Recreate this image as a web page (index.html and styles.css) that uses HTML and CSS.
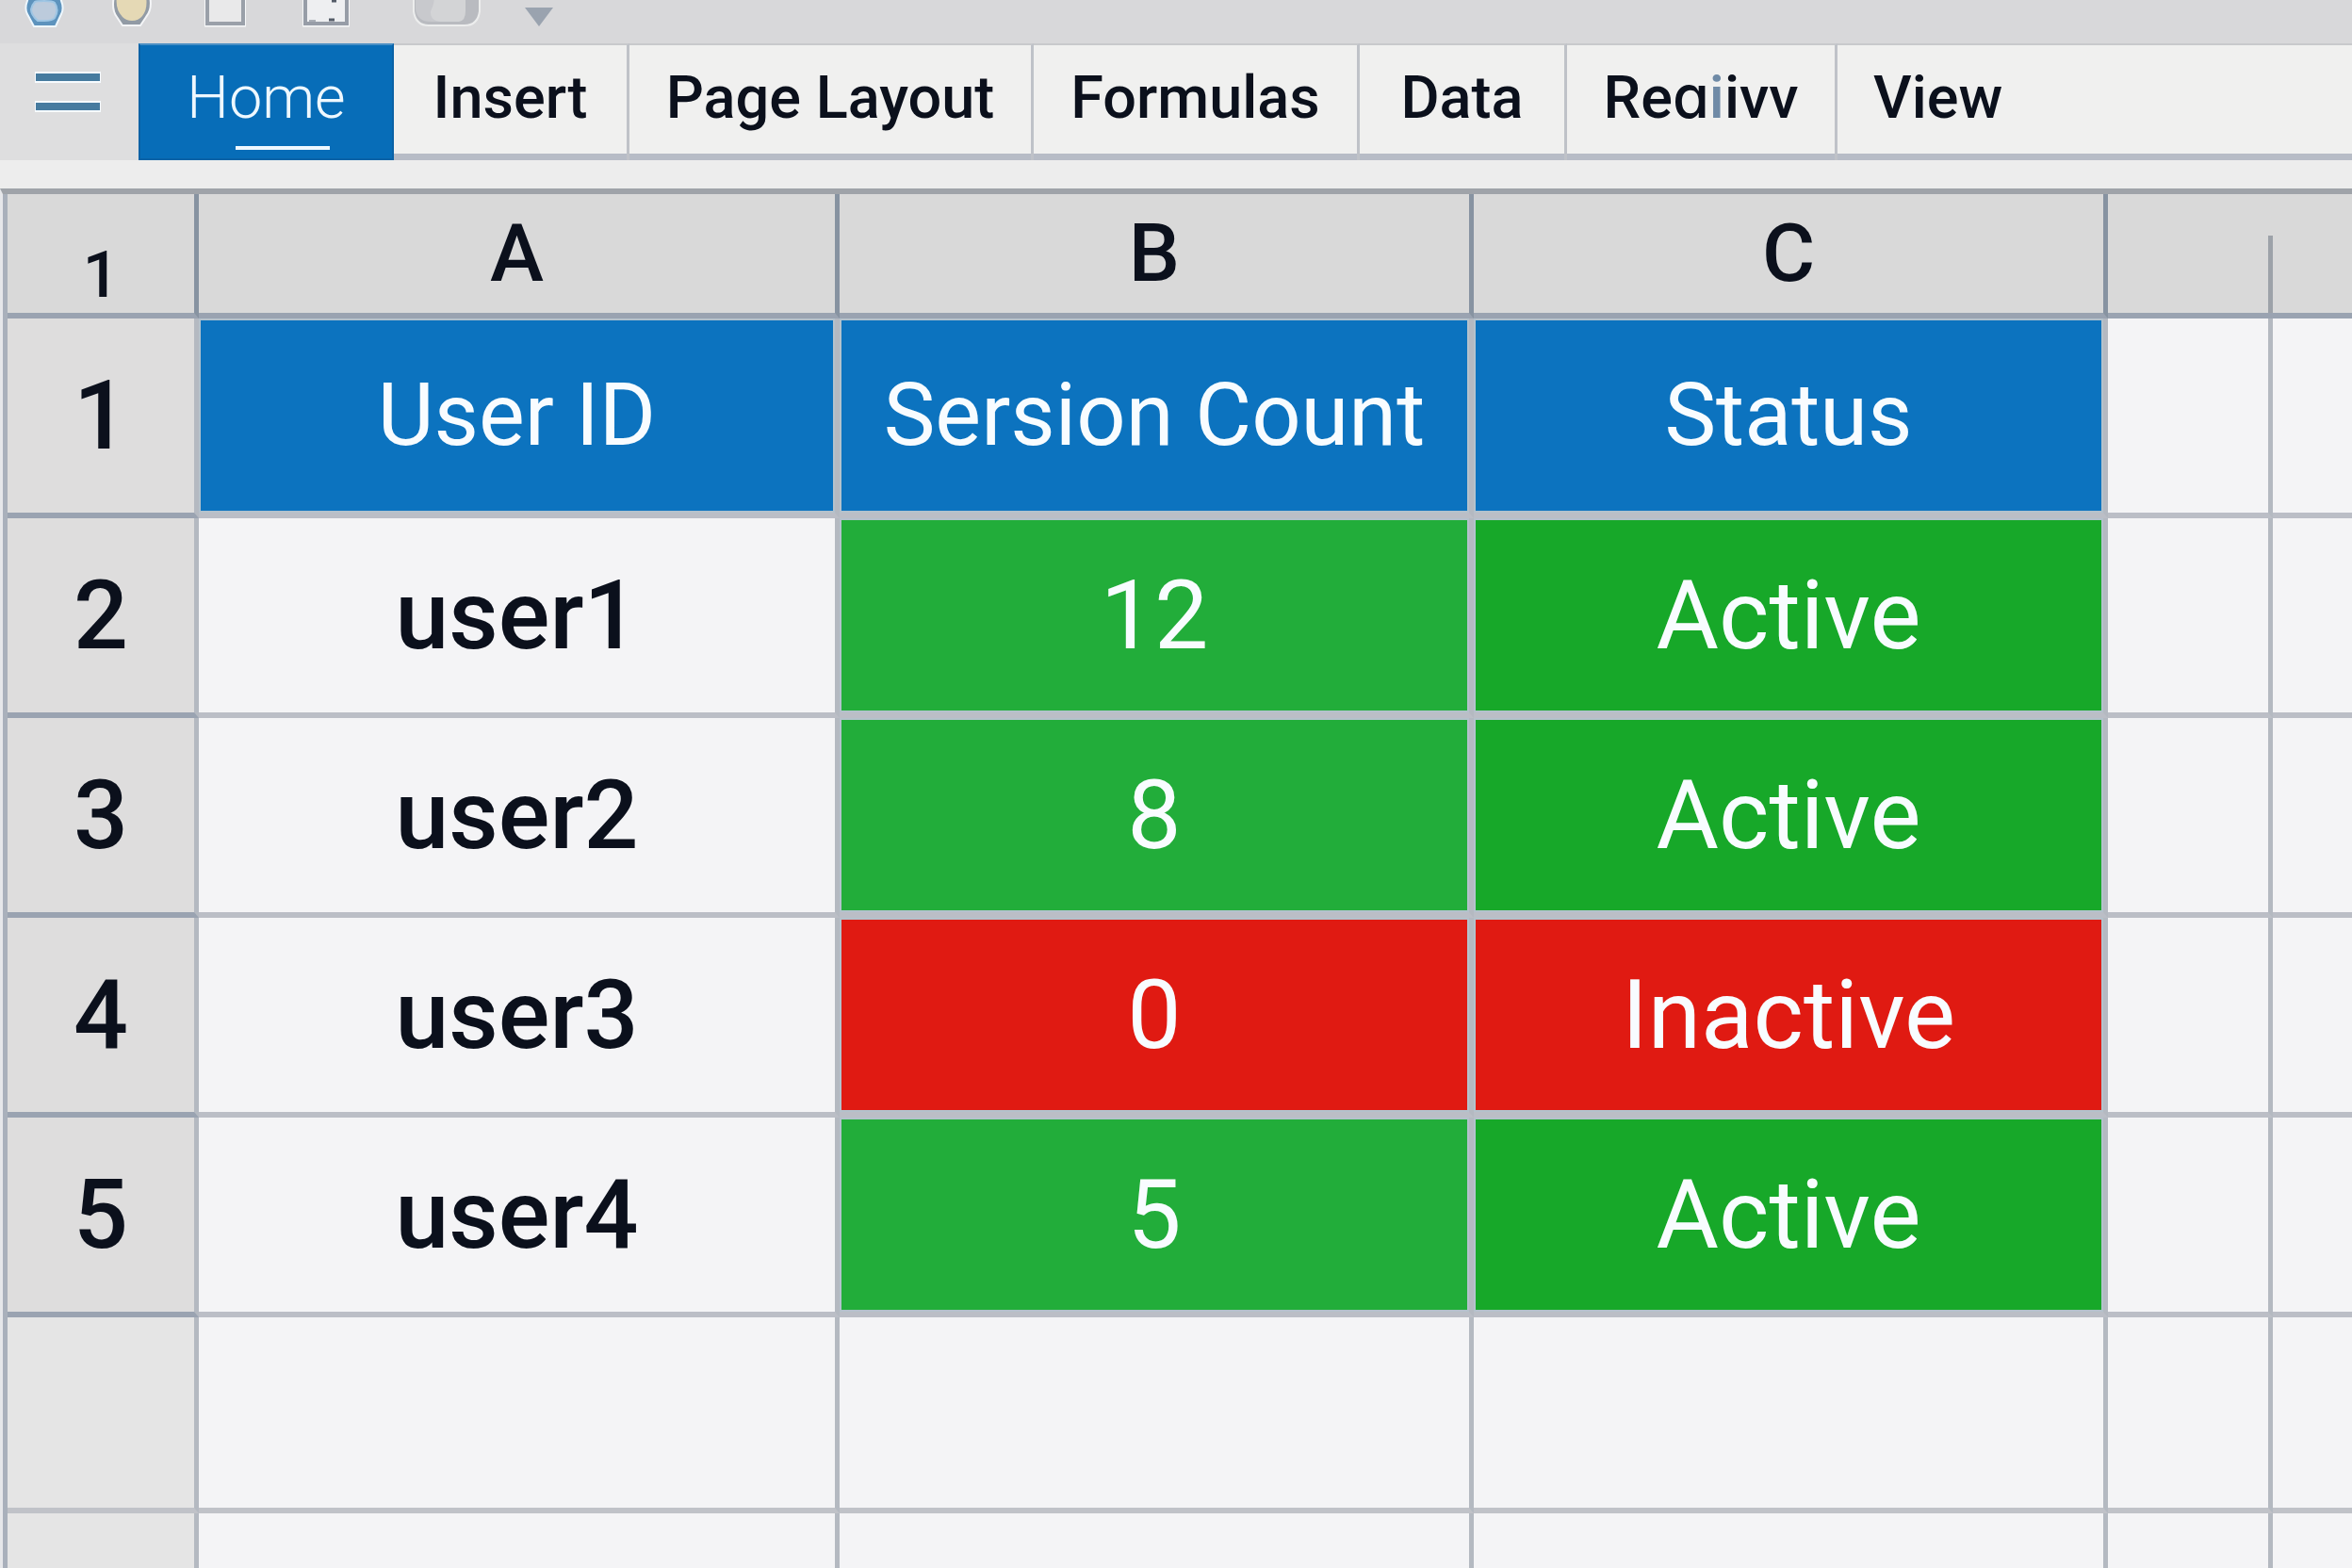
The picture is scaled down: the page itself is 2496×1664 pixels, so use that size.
FILE: index.html
```
<!DOCTYPE html>
<html lang="en">
<head>
<meta charset="utf-8">
<title>User sessions</title>
<link rel="stylesheet" href="styles.css">
</head>
<body>
<header class="quickbar">
  <button class="tool" aria-label="Save"><svg width="44" height="30" viewBox="0 0 44 30"><path d="M6 -4 Q0 8 4 15 L11 28 H34 L40 15 Q44 8 38 -4Z" fill="#5d93bd" stroke="#eef7fd" stroke-width="2"/><path d="M12 2 Q14 1 22 1 Q31 1 33 3 Q38 10 33 19 Q31 22 22 22 H15 Q8 16 8 10 Q9 5 12 2Z" fill="#bccbdc" stroke="#9fc6e4" stroke-width="2"/></svg></button>
  <button class="tool" aria-label="Undo"><svg width="44" height="30" viewBox="0 0 44 30"><path d="M3 -4 Q0 10 6 18 L12 27 H31 L37 18 Q44 10 41 -4Z" fill="#929ba5" stroke="#f4f5f7" stroke-width="2"/><path d="M6 -4 Q4 10 12 18 Q16 22 22 22 Q29 22 33 17 Q39 10 37 -4Z" fill="#e5d9b5"/></svg></button>
  <button class="tool" aria-label="New"><svg width="44" height="30" viewBox="0 0 44 30"><path d="M3 -4 V25 H41 V-4" fill="#eeeeef" stroke="#f6f7f8" stroke-width="7"/><path d="M3 -4 V25 H41 V-4" fill="#e9e9ea" stroke="#9aa0a9" stroke-width="4"/></svg></button>
  <button class="tool" aria-label="Print"><svg width="50" height="30" viewBox="0 0 50 30"><path d="M3 -4 V25 H47 V-4" fill="#eeeff1" stroke="#f6f7f8" stroke-width="7"/><path d="M3 -4 V25 H47 V-4" fill="#eeeff1" stroke="#979da7" stroke-width="4"/><path d="M31 1H36M28 21H34" stroke="#555c68" stroke-width="3"/><path d="M7 22H14" stroke="#a9aeb6" stroke-width="2"/></svg></button>
  <button class="tool" aria-label="Shape"><svg width="74" height="30" viewBox="0 0 74 30"><path d="M2 -4 V12 Q4 27 18 27 H56 Q70 27 72 12 V-4Z" fill="#b9bbc0" stroke="#eceded" stroke-width="2"/><path d="M4 -4 V10 Q6 23 20 23 H40 V-4Z" fill="#c8c9cd"/><path d="M24 -4 Q24 4 20 12 Q19 22 30 23 H50 Q57 22 57 12 V-4Z" fill="#d3d4d6"/></svg></button>
  <button class="tool" aria-label="More"><svg width="32" height="30" viewBox="0 0 32 30"><path d="M1 8 H31 L16 28Z" fill="#9aa3af"/></svg></button>
</header>
<nav class="ribbon">
  <button class="menu" aria-label="Menu"><svg width="72" height="44" viewBox="0 0 72 44"><path d="M1 6H71M1 37H71" stroke="#f6fbff" stroke-width="12"/><path d="M2 6H70M2 37H70" stroke="#467b9f" stroke-width="8"/></svg></button>
  <a class="tab active" href="#home">Home</a>
  <a class="tab" href="#insert">Insert</a>
  <a class="tab" href="#layout">Page Layout</a>
  <a class="tab" href="#formulas">Formulas</a>
  <a class="tab" href="#data">Data</a>
  <a class="tab" href="#review">Reɑ<span class="faint">i</span>ivv</a>
  <a class="tab last" href="#view">View</a>
</nav>
<main>
<table class="sheet">
  <colgroup><col class="c-row"><col class="c-a"><col class="c-b"><col class="c-b"><col class="c-d"><col></colgroup>
  <thead>
    <tr class="letters"><th class="corner">1</th><th>A</th><th>B</th><th>C</th><th class="half"></th><th></th></tr>
  </thead>
  <tbody>
    <tr><th>1</th><td class="blue">User ID</td><td class="blue">Sersion Count</td><td class="blue">Status</td><td></td><td></td></tr>
    <tr><th>2</th><td>user1</td><td class="lime">12</td><td class="green">Active</td><td></td><td></td></tr>
    <tr><th>3</th><td>user2</td><td class="lime">8</td><td class="green">Active</td><td></td><td></td></tr>
    <tr><th>4</th><td>user3</td><td class="red">0</td><td class="red">Inactive</td><td></td><td></td></tr>
    <tr><th>5</th><td>user4</td><td class="lime">5</td><td class="green">Active</td><td></td><td></td></tr>
    <tr class="spare"><th></th><td></td><td></td><td></td><td></td><td></td></tr>
    <tr class="rest"><th></th><td></td><td></td><td></td><td></td><td></td></tr>
  </tbody>
</table>
</main>
</body>
</html>
```
FILE: styles.css
```
* { box-sizing: border-box; }
body {
  margin: 0;
  background: #ededed;
  color: #0b101c;
  font-family: Roboto, Inter, "Liberation Sans", sans-serif;
}
button { padding: 0; border: 0; background: none; }

.quickbar {
  display: grid;
  grid-template-columns: 93px 99px 104px 116px 119px 32px;
  align-items: start;
  justify-items: start;
  height: 46px;
  padding-left: 25px;
  background: #d8d8da;
}
.tool { height: 30px; }
.tool svg { display: block; }

.ribbon {
  display: grid;
  grid-template-columns: 147px 271px 250px 429px 346px 220px 287px 1fr;
  height: 124px;
  border-bottom: 7px solid #b7bcc6;
  background: #f0f0ef;
}
.menu {
  background: #dededf;
  padding-bottom: 20px;
}
.menu svg { display: block; margin: 0 auto 0 36px; }
.tab {
  border-top: 2px solid #c8c9cc;
  border-right: 3px solid #bfc2c8;
  color: inherit;
  font-size: 63px;
  font-weight: 500;
  line-height: 112px;
  text-align: center;
  text-decoration: none;
}
.faint { color: #6f8aa6; }
.tab.last { border-right: 0; padding-left: 38px; text-align: left; }
.tab.active {
  position: relative;
  height: 124px;
  border: 2px solid #0a62a6;
  border-top-color: #4a8fc4;
  background: #076db8;
  color: #eef8ff;
  font-weight: 300;
}
.tab.active::after {
  content: "";
  position: absolute;
  right: 66px;
  bottom: 9px;
  width: 100px;
  height: 4px;
  background: #eef8ff;
}

main {
  margin-top: 30px;
  border-top: 6px solid #9fa3a9;
  border-left: 3px solid #e6e7ea;
}
.sheet {
  width: 100%;
  table-layout: fixed;
  border-collapse: separate;
  border-spacing: 0;
  border-left: 5px solid #a9b0bb;
}
.c-row { width: 203px; }
.c-a { width: 680px; }
.c-b { width: 673px; }
.c-d { width: 175px; }
.sheet th, .sheet td {
  height: 212px;
  padding: 0;
  border-right: 5px solid #b4b9c1;
  border-bottom: 6px solid #bbbec6;
  background: #f4f4f6;
  font-size: 102px;
  font-weight: 500;
  line-height: 120px;
  text-align: center;
  vertical-align: middle;
}
.sheet th { border-bottom-color: #9aa3b1; background: #dedddd; }
.sheet .letters th {
  height: 132px;
  border-right-color: #8793a1;
  background: #d9d9d9;
  font-size: 86px;
}
.sheet .letters .corner { padding-top: 46px; font-size: 68px; line-height: 80px; }
.sheet .letters .half {
  border-right: 0;
  background: linear-gradient(#9da2a9, #9da2a9) right bottom / 5px 82px no-repeat #d9d9d9;
}
.sheet td.blue, .sheet td.lime, .sheet td.green, .sheet td.red {
  box-shadow: inset 0 0 0 2px #b4c2cc;
  color: #f8fcff;
  font-weight: 450;
}
.sheet td.blue { background: #0c73bf; font-size: 92px; }
.sheet td.lime { background: #22ad3a; }
.sheet td.green { background: #17a829; }
.sheet td.red { background: #e01a12; }
.sheet .spare th, .sheet .spare td { height: 208px; border-bottom-color: #c0c2c8; }
.sheet .spare th, .sheet .rest th { background: #e5e5e5; }
.sheet .rest th, .sheet .rest td { height: 58px; border-bottom: 0; }
.sheet th:last-child, .sheet td:last-child { border-right: 0; }
```
